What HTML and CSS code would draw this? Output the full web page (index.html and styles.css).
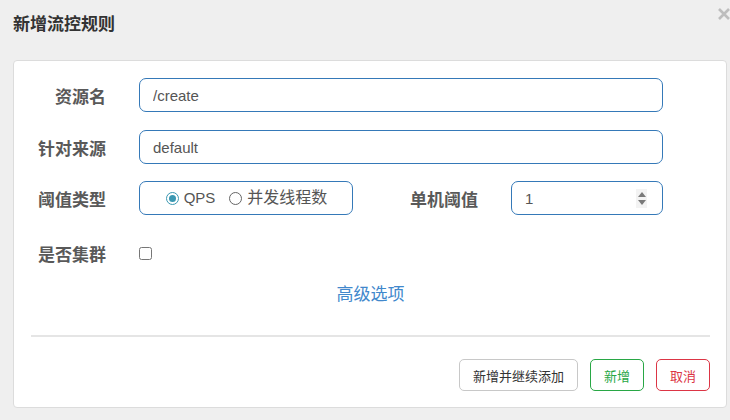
FILE: index.html
```html
<!DOCTYPE html>
<html lang="zh-CN">
<head>
<meta charset="utf-8">
<title>新增流控规则</title>
<link rel="stylesheet" href="styles.css">
</head>
<body>
<div class="modal">
  <div class="modal-header">
    <h3 class="modal-title">新增流控规则</h3>
    <svg class="close" width="12" height="12" viewBox="0 0 12 12"><path d="M1 1 L11 11 M11 1 L1 11" stroke="#bdbdbd" stroke-width="2.6" fill="none"/></svg>
  </div>
  <div class="card">
    <div class="form">
      <div class="row">
        <label class="lbl">资源名</label>
        <input class="field wide" type="text" value="/create">
      </div>
      <div class="row">
        <label class="lbl">针对来源</label>
        <input class="field wide" type="text" value="default">
      </div>
      <div class="row">
        <label class="lbl">阈值类型</label>
        <div class="radio-box">
          <span class="radio checked"></span><span class="rtext">QPS</span>
          <span class="radio"></span><span class="rtext cjk">并发线程数</span>
        </div>
        <label class="lbl">单机阈值</label>
        <div class="field num">
          <span class="num-val">1</span>
          <span class="spin"><span class="up"></span><span class="down"></span></span>
        </div>
      </div>
      <div class="row row-check">
        <label class="lbl">是否集群</label>
        <div class="check-cell"><input type="checkbox" class="check"></div>
      </div>
    </div>
    <div class="adv"><a class="adv-link">高级选项</a></div>
    <div class="divider"></div>
    <div class="footer">
      <button class="btn btn-default">新增并继续添加</button>
      <button class="btn btn-success">新增</button>
      <button class="btn btn-danger">取消</button>
    </div>
  </div>
</div>
</body>
</html>
```

FILE: styles.css
```css
* { box-sizing: border-box; }
html, body { margin: 0; padding: 0; }
body {
  background: #efefef;
  font-family: "Liberation Sans", "Noto Sans CJK SC", sans-serif;
  width: 730px;
  height: 420px;
  overflow: hidden;
}
.modal { position: relative; width: 730px; height: 420px; }
.modal-header {
  height: 60px;
  padding: 14px 13px 0;
}
.modal-title {
  margin: 0;
  font-size: 17px;
  line-height: 22px;
  font-weight: bold;
  color: #333;
}
.close { position: absolute; left: 718px; top: 8px; }
.card {
  margin-left: 13px;
  width: 714px;
  height: 348px;
  background: #fff;
  border: 1px solid #dcdcdc;
  border-radius: 4px;
  padding: 17px 0 0 15px;
}
.form { display: flex; flex-direction: column; gap: 17px; }
.row {
  display: grid;
  grid-template-columns: 77px 214px 92px 152px;
  column-gap: 33px;
  align-items: center;
  height: 34px;
}
.row:nth-child(2) { margin-top: 1px; }
.row-check { margin-top: 4px; }
.lbl {
  text-align: right;
  font-size: 17px;
  font-weight: bold;
  color: #595959;
  white-space: nowrap;
}
.field {
  height: 34px;
  border: 1px solid #3579b8;
  border-radius: 7px;
  padding: 0 13px;
  font-family: "Liberation Sans", "Noto Sans CJK SC", sans-serif;
  font-size: 15px;
  color: #555;
  background: #fff;
  outline: none;
}
.wide { grid-column: 2 / 5; width: 524px; }
.radio-box {
  height: 34px;
  border: 1px solid #3579b8;
  border-radius: 7px;
  display: flex;
  align-items: center;
  justify-content: center;
  padding-left: 1px;
  font-size: 15px;
  color: #555;
}
.radio {
  width: 13px;
  height: 13px;
  border-radius: 50%;
  border: 1px solid #666;
  display: inline-block;
  position: relative;
  margin-right: 5px;
  background: #fff;
}
.radio.checked { border-color: #3b98b2; }
.radio.checked::after {
  content: "";
  position: absolute;
  left: 2px; top: 2px;
  width: 7px; height: 7px;
  border-radius: 50%;
  background: #3b98b2;
}
.rtext { margin-right: 14px; line-height: 20px; }
.rtext.cjk { font-size: 16px; }
.rtext:last-child { margin-right: 0; }
.num {
  display: flex;
  align-items: center;
  justify-content: space-between;
  padding-right: 15px;
}
.spin {
  width: 11px;
  height: 19px;
  background: #f3f3f3;
  display: flex;
  flex-direction: column;
  align-items: center;
  justify-content: center;
  gap: 3px;
}
.up, .down { width: 0; height: 0; border-left: 4.5px solid transparent; border-right: 4.5px solid transparent; }
.up { border-bottom: 5px solid #7a7a7a; }
.down { border-top: 5px solid #7a7a7a; }
.check-cell { display: flex; align-items: center; }
.check { margin: 0; width: 13px; height: 13px; }
.adv {
  text-align: center;
  margin-top: 13px;
  line-height: 24px;
  height: 24px;
  padding-right: 14px;
}
.adv-link { font-size: 17px; color: #4188cc; cursor: pointer; }
.divider {
  margin: 28px 0 0 2px;
  width: 679px;
  height: 2px;
  background: #e5e5e5;
}
.footer {
  display: flex;
  justify-content: flex-end;
  gap: 12px;
  margin-top: 22px;
  width: 681px;
}
.btn {
  height: 32px;
  padding: 0 13px;
  font-family: "Liberation Sans", "Noto Sans CJK SC", sans-serif;
  font-size: 13px;
  background: #fff;
  border-radius: 5px;
  border: 1px solid #ccc;
  cursor: pointer;
}
.btn-default { color: #333; border-color: #c8c8c8; }
.btn-success { color: #28a745; border-color: #28a745; }
.btn-danger { color: #dc3545; border-color: #dc3545; }
```
